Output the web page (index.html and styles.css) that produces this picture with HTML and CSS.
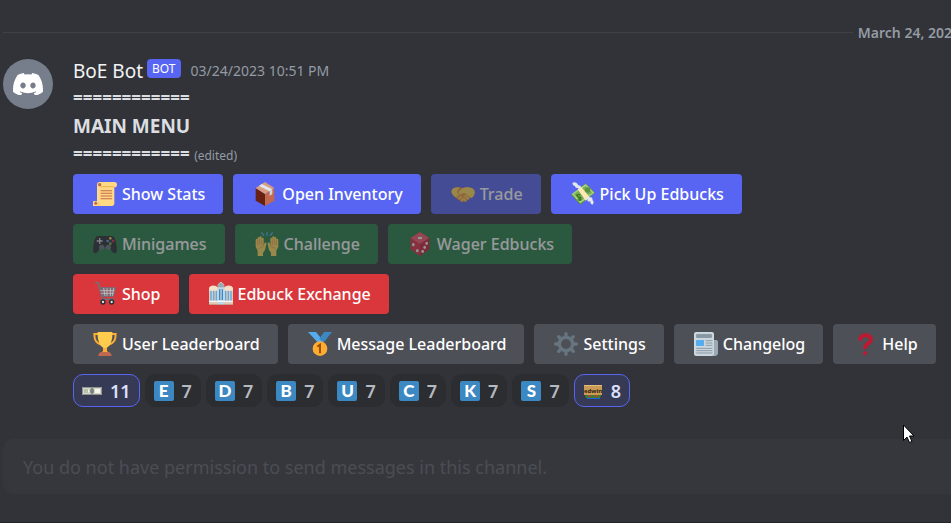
FILE: index.html
```html
<!DOCTYPE html>
<html lang="en">
<head>
<meta charset="utf-8">
<title>BoE Bot</title>
<link rel="stylesheet" href="styles.css">
</head>
<body>
<main class="chat">
  <div class="divider"><span class="divider-date">March 24, 2023</span></div>

  <article class="message">
    <div class="avatar">
      <svg viewBox="0 0 127.14 96.36" aria-hidden="true"><path fill="#fff" d="M107.7,8.07A105.15,105.15,0,0,0,81.47,0a72.06,72.06,0,0,0-3.36,6.83A97.68,97.68,0,0,0,49,6.83,72.37,72.37,0,0,0,45.64,0,105.89,105.89,0,0,0,19.39,8.09C2.79,32.65-1.71,56.6.54,80.21h0A105.73,105.73,0,0,0,32.71,96.36,77.7,77.7,0,0,0,39.6,85.25a68.42,68.42,0,0,1-10.85-5.18c.91-.66,1.8-1.34,2.66-2a75.57,75.57,0,0,0,64.32,0c.87.71,1.76,1.39,2.66,2a68.68,68.68,0,0,1-10.87,5.19,77,77,0,0,0,6.89,11.1A105.25,105.25,0,0,0,126.6,80.22h0C129.24,52.84,122.09,29.11,107.7,8.07ZM42.45,65.69C36.18,65.69,31,60,31,53s5-12.74,11.43-12.74S54,46,53.89,53,48.84,65.69,42.45,65.69Zm42.24,0C78.41,65.69,73.25,60,73.25,53s5-12.74,11.44-12.74S96.23,46,96.12,53,91.08,65.69,84.69,65.69Z"/></svg>
    </div>
    <div class="content">
      <header class="meta">
        <span class="author">BoE Bot</span>
        <span class="tag">BOT</span>
        <time class="time" datetime="2023-03-24T22:51">03/24/2023 10:51 PM</time>
      </header>
      <div class="line rule">============</div>
      <div class="line title">MAIN MENU</div>
      <div class="line"><span class="rule">============</span> <span class="edited">(edited)</span></div>

      <div class="actions">
        <div class="row">
          <button class="btn primary" type="button">
            <svg class="icon" viewBox="0 0 36 36" aria-hidden="true"><path fill="#ffd983" d="M32 0H10a4 4 0 0 0-4 4v25H4a4 4 0 1 0 0 7h24a4 4 0 0 0 4-4V8a4 4 0 0 0 0-8z"/><path fill="#e39f3d" d="M8 29a4 4 0 0 1-2 6h3c1-2 1-4-1-6zM12 6c0 1-1 2-2 2h22V6z" opacity=".55"/><circle cx="10" cy="4" r="2.5" fill="#c1694f"/><circle cx="4" cy="32" r="2.3" fill="#c1694f"/><path stroke="#c1694f" stroke-width="1.6" stroke-linecap="round" d="M12 13h16M12 17h16M12 21h16M12 25h16"/></svg>
            Show Stats</button>
          <button class="btn primary" type="button">
            <svg class="icon" viewBox="0 0 36 36" aria-hidden="true"><path fill="#662113" d="M4 9l14 9v18L4 28z"/><path fill="#c1694f" d="M32 9l-14 9v18l14-8z"/><path fill="#d99e82" d="M18 0L4 9l14 9 14-9z"/><path fill="#e1e8ed" d="M9 6l4-3 16 8-4 3z"/><path fill="#ccd6dd" d="M25 14l4-3v7l-4 3z"/></svg>
            Open Inventory</button>
          <button class="btn primary" type="button" disabled>
            <svg class="icon" viewBox="0 0 36 36" aria-hidden="true"><path fill="#ef9645" d="M17 9c-6-3-11-1-15 1-3 4-1 9 2 11 4 3 9 8 14 9 3 0 5-1 7-3l8-8c3-4 3-7 0-9-4-2-9-3-16-1z"/><path fill="#ffdc5d" d="M35 13c-2-5-11-6-17-4l-6 5c-1 2 0 5 3 4l5-2 11 8c3-2 6-7 4-11zM13 9C7 7 1 10 1 14c0 5 4 7 6 9l4-5c-3-2-2-6 2-9z"/><path stroke="#ffcc4d" stroke-width="3" stroke-linecap="round" d="M8 22l3-3M12 25l3-3M16 28l2-3M22 28l-3-3M26 25l-5-4M29 22l-6-4"/></svg>
            Trade</button>
          <button class="btn primary" type="button">
            <svg class="icon" viewBox="0 0 36 36" aria-hidden="true"><path fill="#5c913b" d="M0 19L22 2l14 14-22 18z"/><path fill="#a7d28b" d="M1 18L22 3l13 13-21 16z"/><path fill="#77b255" d="M4 18L22 6l10 10-18 13z"/><circle cx="25" cy="12" r="4" fill="#5c913b"/><path fill="none" stroke="#3e721d" stroke-width="1.700" d="M14 20c-3-3-6 0-4 2s4-1 5 2-3 4-5 2M8 19l7 9"/><path fill="#ffe8b6" d="M10 11l5-4 13 16-6 5z"/><path fill="#e1e8ed" d="M15 8c0-2-2-3-4-3C9 0 4-1 2 2c1 2 1 4 4 4 0 3 3 3 5 3 0 3 2 3 4-1zM22 25c0-3 4-4 6-2 3-1 5 1 4 4 3 2 2 6 0 7-3-1-3-3-3-5-3 1-5 0-4-3-1 0-3 0-3-1z"/></svg>
            Pick Up Edbucks</button>
        </div>
        <div class="row">
          <button class="btn success" type="button" disabled>
            <svg class="icon" viewBox="0 0 36 36" aria-hidden="true"><path fill="#292f33" d="M8 6h20c4 0 6 5 7 12 1 8 2 13-2 14-4 0-6-5-8-9H11c-2 4-4 9-8 9-4-1-3-6-2-14C2 11 4 6 8 6z"/><circle cx="13" cy="23" r="4" fill="#66757f"/><circle cx="23" cy="23" r="4" fill="#66757f"/><path stroke="#ccd6dd" stroke-width="2" d="M10 9v9M5.500 13.500h9"/><circle cx="26" cy="9.500" r="2" fill="#ffcc4d"/><circle cx="22" cy="13.500" r="2" fill="#55acee"/><circle cx="30" cy="13.500" r="2" fill="#dd2e44"/><circle cx="26" cy="17.500" r="2" fill="#77b255"/></svg>
            Minigames</button>
          <button class="btn success" type="button" disabled>
            <svg class="icon" viewBox="0 0 36 36" aria-hidden="true"><path stroke="#5dadec" stroke-width="2" stroke-linecap="round" d="M10 1l3 4M18 0v5M26 1l-3 4"/><g id="hand"><path fill="#ffdc5d" d="M4 36v-8l-3-6V12c0-2 2-2 3-1V9c0-2 3-2 3 0V8c0-2 3-2 3 0v2c0-2 3-2 3 0v12l1-5c1-2 4-1 3 1l-2 9-3 4v5z"/><path fill="none" stroke="#ef9645" d="M4 12v8M7 10v9M10 11v9M5 25l7-3"/></g><use href="#hand" transform="matrix(-1 0 0 1 36 0)"/></svg>
            Challenge</button>
          <button class="btn success" type="button" disabled>
            <svg class="icon" viewBox="0 0 36 36" aria-hidden="true"><path fill="#dd2e44" d="M18 0L4 9v17l14 10 14-10V9z"/><path fill="#f4576a" d="M18 0L4 9l14 9 14-9z"/><path fill="#a0041e" d="M18 18l14-9v17L18 36z" opacity=".3"/><g fill="#f5f8fa"><ellipse cx="18" cy="9" rx="3.500" ry="2"/><ellipse cx="8" cy="19" rx="2" ry="2.500"/><ellipse cx="14" cy="28" rx="2" ry="2.500"/><ellipse cx="28" cy="17" rx="2" ry="2.500"/><ellipse cx="25" cy="23" rx="2" ry="2.500"/><ellipse cx="22" cy="29" rx="2" ry="2.500"/></g></svg>
            Wager Edbucks</button>
        </div>
        <div class="row">
          <button class="btn danger" type="button">
            <svg class="icon" viewBox="0 0 36 36" aria-hidden="true"><path fill="#66757f" d="M10 9h23l-3 12H13z" opacity=".7"/><path fill="none" stroke="#66757f" stroke-width="2.200" stroke-linecap="round" stroke-linejoin="round" d="M4 1h4l6 25h17M10 9h23l-3 12H13"/><path fill="none" stroke="#ccd6dd" d="M11 13h21M12 17h19M16 9l2 12M21 9v12M26 9v12M31 9l-2 12"/><circle cx="15" cy="30" r="4" fill="#292f33"/><circle cx="28" cy="30" r="4" fill="#292f33"/><circle cx="15" cy="30" r="1.700" fill="#e1e8ed"/><circle cx="28" cy="30" r="1.700" fill="#e1e8ed"/></svg>
            Shop</button>
          <button class="btn danger" type="button">
            <svg class="icon" viewBox="0 0 36 36" aria-hidden="true"><path fill="#e1c9b3" d="M0 10c0-4 11-5 13-2V4l4-4h2l4 4v4c3-3 13-2 13 2v24H0z"/><path fill="#f4dfc9" d="M0 14V9c2-5 11-5 13 0v5M23 14V9c2-5 11-5 13 0v5"/><path fill="#bdd7e7" d="M13 8h10v26H13z"/><path fill="#99aab5" d="M13 8l1-4 3-3h2l3 3 1 4z"/><path stroke="#55acee" stroke-width="2" d="M3 13v17M7 13v17M11 13v17M25 13v17M29 13v17M33 13v17"/><path stroke="#3b88c3" stroke-width="2" d="M16 11v16M20 11v16"/><path fill="#f5f8fa" d="M0 28h36v2H0z"/><path fill="#b39c84" d="M0 33h36v1H0z"/></svg>
            Edbuck Exchange</button>
        </div>
        <div class="row">
          <button class="btn secondary" type="button">
            <svg class="icon" viewBox="0 0 36 36" aria-hidden="true"><path fill="none" stroke="#ffac33" stroke-width="3" d="M9 3H2c0 9 2 13 10 16M27 3h7c0 9-2 13-10 16"/><path fill="#ffac33" d="M15 20h6v8c0 2 4 2 5 5H10c1-3 5-3 5-5z"/><path fill="#ffcc4d" d="M7 0h22c1 13-4 24-11 24S6 13 7 0z"/><path fill="#c1694f" d="M8 36c0-4 3-6 6-6h8c3 0 6 2 6 6z"/></svg>
            User Leaderboard</button>
          <button class="btn secondary" type="button">
            <svg class="icon" viewBox="0 0 36 36" aria-hidden="true"><path fill="#55acee" d="M0 0h12l12 15H14z"/><path fill="#3b88c3" d="M24 0h12L23 16l-6-6z"/><circle cx="18" cy="25" r="11" fill="#ffac33"/><path fill="none" stroke="#9e5200" stroke-width="3" d="M14 22l4-3v13"/></svg>
            Message Leaderboard</button>
          <button class="btn secondary" type="button">
            <svg class="icon" viewBox="0 0 36 36" aria-hidden="true"><circle cx="18" cy="18" r="10" fill="none" stroke="#66757f" stroke-width="5"/><path stroke="#66757f" stroke-width="5" stroke-linecap="round" d="M18 2.500v5M18 28.500v5M2.500 18h5M28.500 18h5M7 7l3.500 3.500M25.500 25.500L29 29M7 29l3.500-3.500M25.500 10.500L29 7"/></svg>
            Settings</button>
          <button class="btn secondary" type="button">
            <svg class="icon" viewBox="0 0 36 36" aria-hidden="true"><path fill="#99aab5" d="M28 12h6l2 2v19l-3 3h-5z"/><rect width="30" height="36" rx="3" fill="#ccd6dd"/><rect x="3" y="3" width="24" height="6" rx="2" fill="#8899a6"/><rect x="3" y="12" width="12" height="9" rx="1" fill="#55acee"/><path stroke="#8899a6" stroke-width="1.500" stroke-linecap="round" d="M18 13h9M18 16.500h9M18 20h9M4 24.500h23M4 28h23M4 31.500h23"/></svg>
            Changelog</button>
          <button class="btn secondary" type="button">
            <svg class="icon" viewBox="0 0 36 36" aria-hidden="true"><path fill="none" stroke="#be1931" stroke-width="6" stroke-linecap="round" d="M11 11c0-8 16-8 16 0 0 6-8 6-9 12"/><circle cx="18" cy="32" r="3" fill="#be1931"/></svg>
            Help</button>
        </div>
      </div>

      <div class="reactions">
        <button class="chip mine" type="button">
          <svg class="emoji" viewBox="0 0 20 20" aria-hidden="true"><path fill="#d4d6cb" d="M0 6h20v8H0z"/><path fill="none" stroke="#8e958b" d="M.5 6.500h19v7H.5z"/><path fill="#b5c2ac" d="M2 8h4v4H2z"/><ellipse cx="10" cy="10" rx="2" ry="3" fill="#7d847b"/><path fill="#f3f5ee" d="M13 8h5v4h-5zM6 9h1v2H6z"/></svg>
          11</button>
        <button class="chip" type="button"><span class="letter">E</span>7</button>
        <button class="chip" type="button"><span class="letter">D</span>7</button>
        <button class="chip" type="button"><span class="letter">B</span>7</button>
        <button class="chip" type="button"><span class="letter">U</span>7</button>
        <button class="chip" type="button"><span class="letter">C</span>7</button>
        <button class="chip" type="button"><span class="letter">K</span>7</button>
        <button class="chip" type="button"><span class="letter">S</span>7</button>
        <button class="chip mine" type="button">
          <svg class="emoji" viewBox="0 0 20 20" aria-hidden="true"><path fill="#c99b57" d="M1 4h18v10H1z"/><path fill="#e3bd77" d="M1 4h18v1H1z"/><path fill="#3e7d32" d="M2 14h16l-1 3H3z"/><path fill="#a34a2d" d="M5 14h3v2H5zM12 14h3v2h-3z"/><path fill="#1a62e0" d="M4 17h13v1H4z"/><text class="sign" x="10" y="12" text-anchor="middle">edwin</text></svg>
          8</button>
      </div>
    </div>
  </article>

  <input class="composer" type="text" disabled aria-label="Message" placeholder="You do not have permission to send messages in this channel.">
</main>
<svg class="cursor" viewBox="0 0 12 20" aria-hidden="true"><path fill="#fff" stroke="#000" d="M.5 1v15.500l3.500-3.500 2.500 5.500 2.500-1-2.500-5.500H11z"/></svg>
</body>
</html>
```

FILE: styles.css
```css
* { box-sizing: border-box; }

body {
  margin: 0;
  min-height: 100vh;
  overflow: hidden;
  background: #313338;
  border-bottom: 1px solid #232428;
  color: #dbdee1;
  font-family: "Noto Sans", "Open Sans", sans-serif;
  font-size: 16px;
}

button, input { font-family: inherit; }

.chat { padding: 23px 0 0 3px; }

.divider {
  display: flex;
  align-items: center;
  gap: 5px;
  margin-right: -9px;
  height: 18px;
  font-size: 14px;
  font-weight: 600;
  color: #949ba4;
  white-space: nowrap;
}
.divider::before {
  content: "";
  flex: 1;
  height: 1px;
  background: #3f4147;
}

.message {
  display: flex;
  gap: 20px;
  margin-top: 16px;
}

.avatar {
  display: flex;
  align-items: center;
  justify-content: center;
  flex: none;
  width: 50px;
  height: 50px;
  margin-top: 2px;
  border-radius: 50%;
  background: #757e8a;
}
.avatar svg { width: 30px; }

.content { flex: 1; min-width: 0; }

.meta {
  display: flex;
  align-items: center;
  height: 27px;
  white-space: nowrap;
}
.author { font-size: 19px; color: #f2f3f5; }
.tag {
  margin: 0 10px 4px 4px;
  padding: 0 5px;
  border-radius: 4px;
  background: #5865f2;
  color: #fff;
  font-size: 12px;
  line-height: 19px;
}
.time { font-size: 14px; color: #949ba4; }

.line { height: 28px; line-height: 28px; font-size: 17px; }
.rule { font-weight: 700; }
.title { font-size: 19px; font-weight: 700; }
.edited { font-size: 12px; color: #949ba4; }

.actions {
  display: grid;
  gap: 10px;
  margin-top: 6px;
}
.row { display: flex; gap: 10px; }

.btn {
  display: flex;
  align-items: center;
  gap: 5px;
  height: 40px;
  padding: 0 18px 0 20px;
  border: 0;
  border-radius: 4px;
  color: #fff;
  font-size: 16px;
  font-weight: 500;
  white-space: nowrap;
}
.btn:disabled { opacity: .5; }
.primary { background: #5865f2; }
.success { background: #248046; }
.danger { background: #da373c; }
.secondary { background: #4e5058; }
.icon { flex: none; width: 24px; height: 24px; }

.reactions { display: flex; gap: 5px; margin-top: 10px; }
.chip {
  display: flex;
  align-items: center;
  gap: 8px;
  height: 33px;
  padding: 0 8px;
  border: 1px solid #2b2d31;
  border-radius: 10px;
  background: #2b2d31;
  color: #b5bac1;
  font-size: 18px;
  font-weight: 600;
  line-height: 24px;
}
.mine {
  border-color: #5865f2;
  background: #373a54;
  color: #dee0fc;
}
.emoji { width: 20px; height: 20px; }
.letter {
  width: 20px;
  border-radius: 2px;
  background: #3b88c3;
  color: #fff;
  font-family: Lato, sans-serif;
  font-size: 17px;
  font-weight: 900;
  line-height: 20px;
}
.sign {
  fill: #30210f;
  font-family: "Noto Sans", sans-serif;
  font-size: 6px;
  font-weight: 700;
}

.composer {
  display: block;
  width: calc(100% + 12px);
  height: 55px;
  margin-top: 32px;
  padding: 0 20px;
  border: 0;
  border-radius: 10px;
  background: #36373c;
  font-size: 18px;
  font-weight: 400;
}
.composer::placeholder { color: #4b4d54; opacity: 1; }

.cursor {
  position: absolute;
  left: 903px;
  top: 424px;
  width: 12px;
  height: 20px;
}
```
